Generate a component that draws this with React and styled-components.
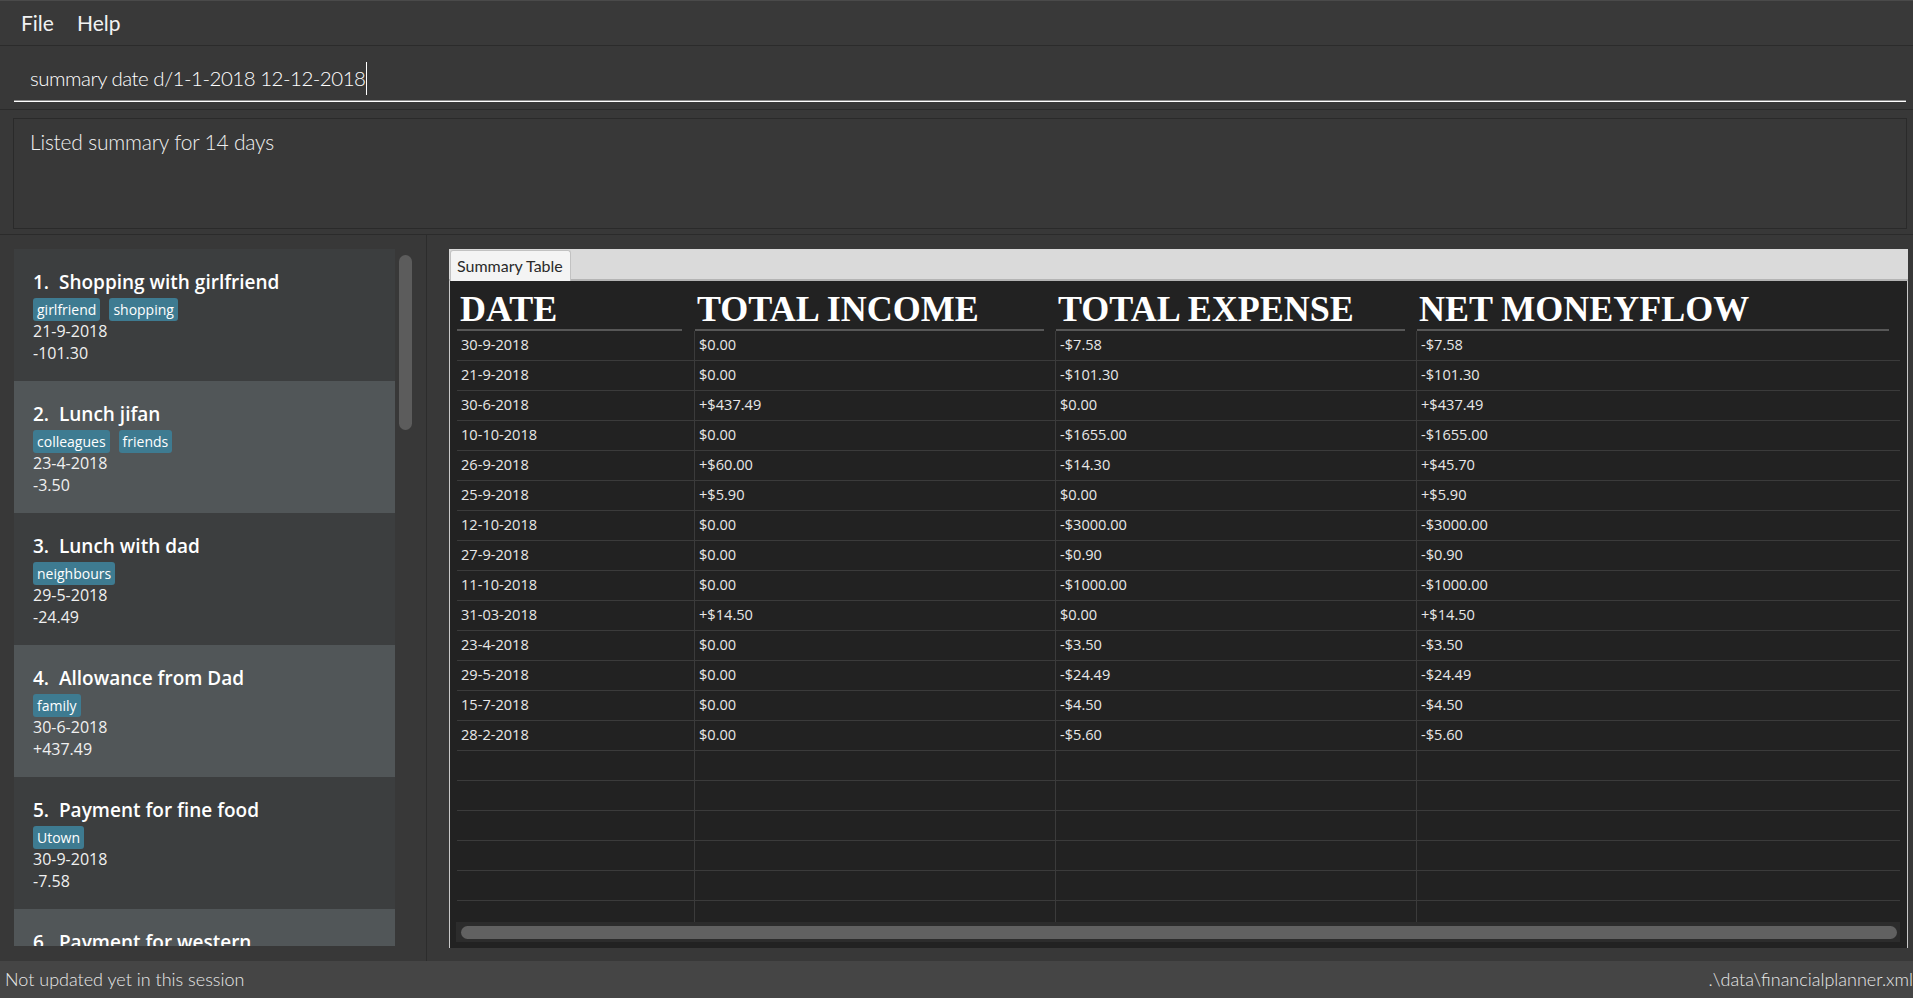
import React from 'react';
import styled, { createGlobalStyle } from 'styled-components';

const GlobalStyle = createGlobalStyle`
  html, body { margin: 0; padding: 0; background: #383838; overflow: hidden; }
  * { box-sizing: border-box; }
`;

const SANS = `"Open Sans", "Noto Sans", sans-serif`;
const LIGHT = `"Lato", "Open Sans", sans-serif`;
const SERIF = `"Liberation Serif", "Times New Roman", serif`;

const Window = styled.div`
  width: 1913px;
  height: 998px;
  display: flex;
  flex-direction: column;
  background: #383838;
  color: #ffffff;
`;

const MenuBar = styled.div`
  flex: none;
  height: 46px;
  display: flex;
  gap: 23px;
  padding: 8px 0 0 21px;
  background: #393939;
  border-top: 1px solid #4a4a4a;
  border-bottom: 1px solid #2b2b2b;
`;

const MenuItem = styled.span`
  font-family: ${LIGHT};
  font-size: 21px;
  line-height: 28px;
  color: #f2f2f2;
`;

const CommandPane = styled.div`
  flex: none;
  height: 64px;
  padding: 1px 7px 7px 14px;
  border-bottom: 1px solid #2b2b2b;
`;

const CommandField = styled.div`
  height: 55px;
  padding: 15px 0 0 16px;
  border-bottom: 1px solid #ffffff;
  box-shadow: 0 -1px 0 #8a8a8a inset;
  font-family: ${LIGHT};
  font-weight: 300;
  font-size: 20.5px;
  letter-spacing: -0.5px;
  line-height: 30px;
  color: #ffffff;
  white-space: pre;
`;

const Caret = styled.span`
  display: inline-block;
  width: 0;
  height: 33px;
  margin-left: 1px;
  border-left: 1px solid #ffffff;
  vertical-align: -9px;
`;

const ResultPane = styled.div`
  flex: none;
  height: 125px;
  padding: 8px 6px 5px 13px;
  border-bottom: 1px solid #2b2b2b;
`;

const ResultBox = styled.div`
  height: 111px;
  border: 1px solid #2a2a2a;
  padding: 8px 0 0 16px;
  font-family: ${LIGHT};
  font-weight: 300;
  font-size: 21px;
  letter-spacing: -0.2px;
  line-height: 30px;
  color: #f0f0f0;
`;

const Main = styled.div`
  flex: none;
  height: 726px;
  display: flex;
`;

const LeftPane = styled.div`
  flex: none;
  width: 427px;
  padding: 14px 0 15px 14px;
  display: flex;
  border-right: 1px solid #2c2c2c;
`;

const CardList = styled.div`
  width: 381px;
  height: 697px;
  overflow: hidden;
  display: flex;
  flex-direction: column;
`;

const Card = styled.div`
  flex: none;
  height: 132px;
  padding: 20px 0 0 19px;
  background: ${(p) => (p.$alt ? '#515658' : '#3c3e3f')};
  display: flex;
  flex-direction: column;
  align-items: flex-start;
`;

const CardTitle = styled.div`
  font-family: ${SANS};
  font-weight: 600;
  font-size: 19px;
  line-height: 26px;
  color: #ffffff;
  white-space: pre;
`;

const TagRow = styled.div`
  display: flex;
  gap: 9px;
  margin-top: 3px;
`;

const Tag = styled.span`
  height: 23px;
  padding: 2px 4px 0 4px;
  background: #3e7b91;
  border-radius: 3px;
  font-family: ${SANS};
  font-size: 14px;
  line-height: 19px;
  color: #ffffff;
`;

const CardLine = styled.div`
  font-family: ${SANS};
  font-size: 16px;
  line-height: 22px;
  color: #f0f0f0;
  margin-top: ${(p) => p.$mt || 0}px;
`;

const ListScroll = styled.div`
  flex: none;
  width: 18px;
  padding: 6px 0 0 4px;
`;

const ListThumb = styled.div`
  width: 13px;
  height: 175px;
  border-radius: 7px;
  background: #5c5c5c;
`;

const RightPane = styled.div`
  flex: 1;
  min-width: 0;
  padding: 14px 5px 13px 22px;
  display: flex;
`;

const TabPane = styled.div`
  flex: 1;
  display: flex;
  flex-direction: column;
`;

const TabHeader = styled.div`
  flex: none;
  height: 32px;
  background: #dadada;
  border-bottom: 2px solid #b4b4b4;
  display: flex;
  align-items: flex-end;
  padding-left: 1px;
`;

const Tab = styled.div`
  height: 31px;
  margin-bottom: -2px;
  padding: 3px 7px 0 6px;
  background: #f4f4f4;
  border: 1px solid #c2c2c2;
  border-bottom: none;
  border-radius: 3px 3px 0 0;
  font-family: ${LIGHT};
  font-size: 16px;
  line-height: 24px;
  color: #2a2a2a;
`;

const TableArea = styled.div`
  flex: 1;
  min-height: 0;
  display: flex;
  flex-direction: column;
  background: #222222;
  border-left: 1px solid #c9c9c9;
  border-right: 1px solid #c9c9c9;
  padding: 0 7px 6px 7px;
`;

const Grid = styled.div`
  display: grid;
  grid-template-columns: 237px 361px 361px 1fr;
`;

const HeaderRow = styled(Grid)`
  flex: none;
  height: 50px;
`;

const HeaderCell = styled.div`
  margin-right: ${(p) => (p.$first ? 12 : 11)}px;
  margin-left: ${(p) => (p.$first ? 0 : 1)}px;
  padding: 9px 0 0 ${(p) => (p.$first ? 3 : 2)}px;
  border-bottom: 2px solid #575757;
  font-family: ${SERIF};
  font-weight: 700;
  font-size: 36px;
  line-height: 39px;
  color: #ffffff;
  white-space: nowrap;
  overflow: hidden;
`;

const Body = styled.div`
  flex: 1;
  min-height: 0;
  overflow: hidden;
`;

const Row = styled(Grid)`
  height: 30px;
  border-bottom: 1px solid #3b3b3b;
`;

const Cell = styled.div`
  padding: 0 0 0 4px;
  border-left: ${(p) => (p.$first ? 'none' : '1px solid #3b3b3b')};
  font-family: ${SANS};
  font-size: 14.6px;
  line-height: 27px;
  color: #e8e8e8;
  white-space: nowrap;
`;

const HScroll = styled.div`
  flex: none;
  height: 20px;
  margin-left: -1px;
  background: #2c2c2c;
  padding: 4px 3px 3px 5px;
`;

const HThumb = styled.div`
  height: 13px;
  border-radius: 7px;
  background: #616161;
`;

const StatusBar = styled.div`
  flex: none;
  height: 37px;
  background: #454545;
  display: flex;
  justify-content: space-between;
  align-items: center;
  padding: 0 0 0 5px;
  font-family: ${LIGHT};
  font-weight: 300;
  font-size: 18px;
  line-height: 37px;
  color: #e8e8e8;
  white-space: nowrap;
`;

const cards = [
  { title: 'Shopping with girlfriend', tags: ['girlfriend', 'shopping'], date: '21-9-2018', amount: '-101.30' },
  { title: 'Lunch jifan', tags: ['colleagues', 'friends'], date: '23-4-2018', amount: '-3.50' },
  { title: 'Lunch with dad', tags: ['neighbours'], date: '29-5-2018', amount: '-24.49' },
  { title: 'Allowance from Dad', tags: ['family'], date: '30-6-2018', amount: '+437.49' },
  { title: 'Payment for fine food', tags: ['Utown'], date: '30-9-2018', amount: '-7.58' },
  { title: 'Payment for western', tags: [] },
];

const rows = [
  ['30-9-2018', '$0.00', '-$7.58', '-$7.58'],
  ['21-9-2018', '$0.00', '-$101.30', '-$101.30'],
  ['30-6-2018', '+$437.49', '$0.00', '+$437.49'],
  ['10-10-2018', '$0.00', '-$1655.00', '-$1655.00'],
  ['26-9-2018', '+$60.00', '-$14.30', '+$45.70'],
  ['25-9-2018', '+$5.90', '$0.00', '+$5.90'],
  ['12-10-2018', '$0.00', '-$3000.00', '-$3000.00'],
  ['27-9-2018', '$0.00', '-$0.90', '-$0.90'],
  ['11-10-2018', '$0.00', '-$1000.00', '-$1000.00'],
  ['31-03-2018', '+$14.50', '$0.00', '+$14.50'],
  ['23-4-2018', '$0.00', '-$3.50', '-$3.50'],
  ['29-5-2018', '$0.00', '-$24.49', '-$24.49'],
  ['15-7-2018', '$0.00', '-$4.50', '-$4.50'],
  ['28-2-2018', '$0.00', '-$5.60', '-$5.60'],
  ['', '', '', ''],
  ['', '', '', ''],
  ['', '', '', ''],
  ['', '', '', ''],
  ['', '', '', ''],
  ['', '', '', ''],
];

const headers = ['DATE', 'TOTAL INCOME', 'TOTAL EXPENSE', 'NET MONEYFLOW'];

export default function App() {
  return (
    <>
      <GlobalStyle />
      <Window>
        <MenuBar>
          <MenuItem>File</MenuItem>
          <MenuItem>Help</MenuItem>
        </MenuBar>
        <CommandPane>
          <CommandField>
            summary date d/1-1-2018 12-12-2018<Caret />
          </CommandField>
        </CommandPane>
        <ResultPane>
          <ResultBox>Listed summary for 14 days</ResultBox>
        </ResultPane>
        <Main>
          <LeftPane>
            <CardList>
              {cards.map((c, i) => (
                <Card key={i} $alt={i % 2 === 1}>
                  <CardTitle>{`${i + 1}.  ${c.title}`}</CardTitle>
                  {c.tags.length > 0 && (
                    <TagRow>
                      {c.tags.map((t) => (
                        <Tag key={t}>{t}</Tag>
                      ))}
                    </TagRow>
                  )}
                  {c.date && <CardLine $mt={-1}>{c.date}</CardLine>}
                  {c.amount && <CardLine>{c.amount}</CardLine>}
                </Card>
              ))}
            </CardList>
            <ListScroll>
              <ListThumb />
            </ListScroll>
          </LeftPane>
          <RightPane>
            <TabPane>
              <TabHeader>
                <Tab>Summary Table</Tab>
              </TabHeader>
              <TableArea>
                <HeaderRow>
                  {headers.map((h, i) => (
                    <HeaderCell key={h} $first={i === 0}>
                      {h}
                    </HeaderCell>
                  ))}
                </HeaderRow>
                <Body>
                  {rows.map((r, ri) => (
                    <Row key={ri}>
                      {r.map((v, ci) => (
                        <Cell key={ci} $first={ci === 0}>
                          {v}
                        </Cell>
                      ))}
                    </Row>
                  ))}
                </Body>
                <HScroll>
                  <HThumb />
                </HScroll>
              </TableArea>
            </TabPane>
          </RightPane>
        </Main>
        <StatusBar>
          <span>Not updated yet in this session</span>
          <span>.\data\financialplanner.xml</span>
        </StatusBar>
      </Window>
    </>
  );
}
